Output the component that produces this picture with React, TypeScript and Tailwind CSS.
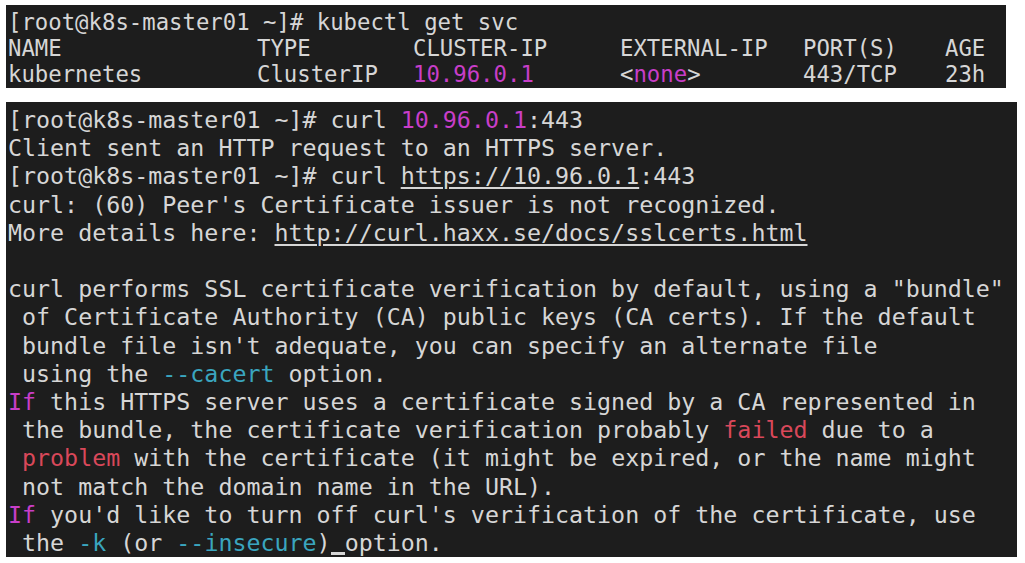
const mono = { fontFamily: '"DejaVu Sans Mono", "Liberation Mono", monospace' }

function Pink({ children }: { children: React.ReactNode }) {
  return <span className="text-[#c83ec8]">{children}</span>
}

function Cyan({ children }: { children: React.ReactNode }) {
  return <span className="text-[#3aa5bf]">{children}</span>
}

function Red({ children }: { children: React.ReactNode }) {
  return <span className="text-[#d9485a]">{children}</span>
}

function Link({ children }: { children: React.ReactNode }) {
  return <span className="underline underline-offset-[3px] decoration-[1.5px]">{children}</span>
}

const cols = ['w-[249px]', 'w-[156px]', 'w-[207px]', 'w-[183px]', 'w-[142px]', 'w-[60px]']

function Row({ cells }: { cells: React.ReactNode[] }) {
  return (
    <div className="flex">
      {cells.map((c, i) => (
        <div key={i} className={`${cols[i]} shrink-0`}>
          {c}
        </div>
      ))}
    </div>
  )
}

export default function App() {
  return (
    <div className="min-h-screen w-[1025px] bg-white pt-[5px] pl-[6px] flex flex-col gap-[14px]">
      {/* kubectl get svc */}
      <div
        className="w-[1000px] h-[83px] bg-[#1d1d1d] text-[#d6d6d6] text-[22.3px] leading-[26px] pt-[4px] pl-[2px] whitespace-pre overflow-hidden"
        style={mono}
      >
        <div>[root@k8s-master01 ~]# kubectl get svc</div>
        <Row cells={['NAME', 'TYPE', 'CLUSTER-IP', 'EXTERNAL-IP', 'PORT(S)', 'AGE']} />
        <Row
          cells={[
            'kubernetes',
            'ClusterIP',
            <Pink>10.96.0.1</Pink>,
            <>
              {'<'}
              <Pink>none</Pink>
              {'>'}
            </>,
            '443/TCP',
            '23h',
          ]}
        />
      </div>

      {/* curl output */}
      <div
        className="w-[1011px] h-[455px] bg-[#1d1d1d] text-[#d6d6d6] text-[23.3px] leading-[28.2px] pt-[4px] pl-[2px] whitespace-pre overflow-hidden"
        style={mono}
      >
        <div>
          [root@k8s-master01 ~]# curl <Pink>10.96.0.1</Pink>:443
        </div>
        <div>Client sent an HTTP request to an HTTPS server.</div>
        <div>
          [root@k8s-master01 ~]# curl <Link>https://10.96.0.1</Link>:443
        </div>
        <div>curl: (60) Peer's Certificate issuer is not recognized.</div>
        <div>
          More details here: <Link>http://curl.haxx.se/docs/sslcerts.html</Link>
        </div>
        <div> </div>
        <div>curl performs SSL certificate verification by default, using a "bundle"</div>
        <div> of Certificate Authority (CA) public keys (CA certs). If the default</div>
        <div> bundle file isn't adequate, you can specify an alternate file</div>
        <div>
          {' using the '}
          <Cyan>--cacert</Cyan>
          {' option.'}
        </div>
        <div>
          <Pink>If</Pink>
          {' this HTTPS server uses a certificate signed by a CA represented in'}
        </div>
        <div>
          {' the bundle, the certificate verification probably '}
          <Red>failed</Red>
          {' due to a'}
        </div>
        <div>
          {' '}
          <Red>problem</Red>
          {' with the certificate (it might be expired, or the name might'}
        </div>
        <div> not match the domain name in the URL).</div>
        <div>
          <Pink>If</Pink>
          {" you'd like to turn off curl's verification of the certificate, use"}
        </div>
        <div>
          {' the '}
          <Cyan>-k</Cyan>
          {' (or '}
          <Cyan>--insecure</Cyan>
          {')'}
          <span className="relative">
            {' '}
            <span className="absolute left-0 right-0 bottom-[1px] h-[3px] bg-[#d6d6d6]" />
          </span>
          {'option.'}
        </div>
      </div>
    </div>
  )
}
